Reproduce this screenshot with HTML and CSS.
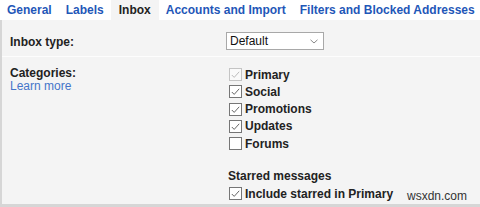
FILE: index.html
```html
<!DOCTYPE html>
<html>
<head>
<meta charset="utf-8">
<link rel="stylesheet" href="styles.css">
</head>
<body>
<div class="frame">
  <nav class="tabs">
    <span class="tab">General</span>
    <span class="tab">Labels</span>
    <span class="tab active">Inbox</span>
    <span class="tab">Accounts and Import</span>
    <span class="tab">Filters and Blocked Addresses</span>
  </nav>
  <div class="content">
    <div class="row row-type">
      <div class="label">Inbox type:</div>
      <div class="value">
        <div class="select">
          <span>Default</span>
          <svg class="chev" width="8" height="5" viewBox="0 0 8 5"><polyline points="0.5,0.8 4,4 7.5,0.8" fill="none" stroke="#888" stroke-width="1"/></svg>
        </div>
      </div>
    </div>
    <div class="row row-cats">
      <div class="label">
        <div>Categories:</div>
        <div class="link">Learn more</div>
      </div>
      <div class="value">
        <div class="check disabled"><svg width="13" height="13" viewBox="0 0 13 13"><rect x="0.5" y="0.5" width="12" height="12" fill="#fafafa" stroke="#c4c4c4"/><polyline points="2.8,7 5.2,9.4 10.2,3.8" fill="none" stroke="#b4b4b4" stroke-width="0.9"/></svg><span>Primary</span></div>
        <div class="check"><svg width="13" height="13" viewBox="0 0 13 13"><rect x="0.5" y="0.5" width="12" height="12" fill="#fff" stroke="#767676"/><polyline points="2.8,7 5.2,9.4 10.2,3.8" fill="none" stroke="#555" stroke-width="0.9"/></svg><span>Social</span></div>
        <div class="check"><svg width="13" height="13" viewBox="0 0 13 13"><rect x="0.5" y="0.5" width="12" height="12" fill="#fff" stroke="#767676"/><polyline points="2.8,7 5.2,9.4 10.2,3.8" fill="none" stroke="#555" stroke-width="0.9"/></svg><span>Promotions</span></div>
        <div class="check"><svg width="13" height="13" viewBox="0 0 13 13"><rect x="0.5" y="0.5" width="12" height="12" fill="#fff" stroke="#767676"/><polyline points="2.8,7 5.2,9.4 10.2,3.8" fill="none" stroke="#555" stroke-width="0.9"/></svg><span>Updates</span></div>
        <div class="check"><svg width="13" height="13" viewBox="0 0 13 13"><rect x="0.5" y="0.5" width="12" height="12" fill="#fff" stroke="#767676"/></svg><span>Forums</span></div>
        <div class="sub">Starred messages</div>
        <div class="check"><svg width="13" height="13" viewBox="0 0 13 13"><rect x="0.5" y="0.5" width="12" height="12" fill="#fff" stroke="#767676"/><polyline points="2.8,7 5.2,9.4 10.2,3.8" fill="none" stroke="#555" stroke-width="0.9"/></svg><span>Include starred in Primary</span></div>
      </div>
    </div>
  </div>
  <div class="watermark">wsxdn.com</div>
</div>
</body>
</html>
```

FILE: styles.css
```css
html, body {
  margin: 0;
  padding: 0;
  background: #f4f4f4;
}
body {
  font-family: "Liberation Sans", Arial, sans-serif;
  font-size: 12px;
  color: #222;
}
.frame {
  position: relative;
  width: 480px;
  height: 207px;
  overflow: hidden;
  background: #f4f4f4;
}
.tabs {
  display: flex;
  height: 20px;
  background: #fff;
}
.tab {
  padding: 0 7px;
  line-height: 20px;
  font-weight: bold;
  color: #1f57b8;
  white-space: nowrap;
}
.tab.active {
  background: #f4f4f4;
  color: #222;
  padding: 0 8px;
}
.content {
  height: 184px;
  border-left: 2px solid #d6d6d6;
  border-bottom: 3px solid #d6d6d6;
}
.row {
  display: grid;
  grid-template-columns: 216px 1fr;
  padding-left: 8px;
}
.row-type {
  padding-top: 12px;
  height: 24px;
  border-bottom: 1px solid #fdfdfd;
  align-items: start;
}
.row-type .label {
  padding-top: 3px;
  line-height: 14px;
}
.label {
  font-weight: bold;
  line-height: 13px;
}
.select {
  height: 16px;
  border: 1px solid #a8a8a8;
  background: #fff;
  display: flex;
  align-items: center;
  justify-content: space-between;
  padding: 0 5px 0 3px;
  box-sizing: content-box;
  width: 88px;
  line-height: 16px;
  color: #111;
}
.chev {
  display: block;
}
.row-cats {
  padding-top: 9px;
}
.row-cats .label {
  padding-top: 1px;
}
.link {
  font-weight: normal;
  color: #4574c9;
}
.row-cats .value {
  padding-left: 3px;
}
.check {
  display: flex;
  align-items: center;
  gap: 3px;
  height: 17.25px;
  font-weight: bold;
  color: #222;
}
.check svg {
  display: block;
  flex: none;
}
.sub {
  font-weight: bold;
  color: #222;
  margin-top: 17px;
  margin-left: -1px;
  line-height: 14px;
  margin-bottom: 2px;
}
.watermark {
  position: absolute;
  left: 407px;
  top: 189px;
  font-size: 12px;
  line-height: 14px;
  color: #333;
}
```
